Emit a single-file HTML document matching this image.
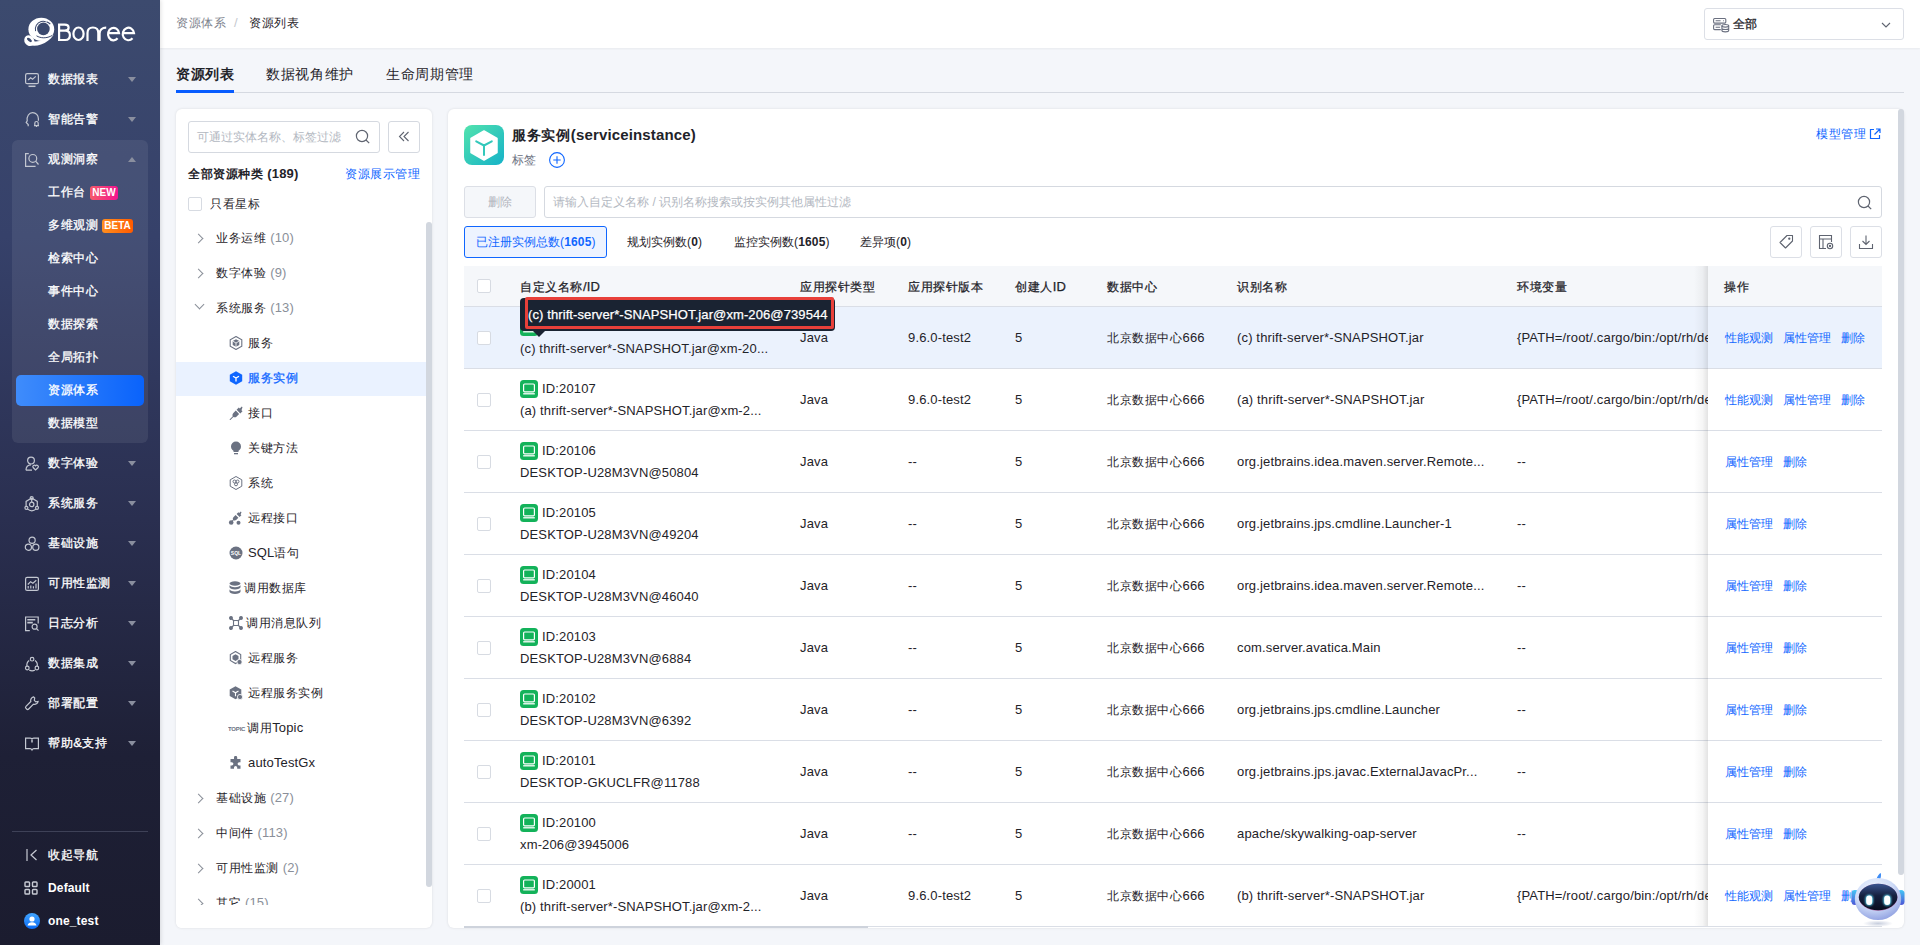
<!DOCTYPE html>
<html><head><meta charset="utf-8">
<style>
*{box-sizing:border-box;margin:0;padding:0}
html,body{width:1920px;height:945px;overflow:hidden;background:#f4f6fa;font-family:"Liberation Sans",sans-serif;color:#1f2329}
.abs{position:absolute}
.t{position:absolute;white-space:nowrap;line-height:16px;letter-spacing:.15px}
.c{font-size:calc(1em - 1px);letter-spacing:.05em}
#side{position:absolute;left:0;top:0;width:160px;height:945px;z-index:5;box-shadow:1px 0 4px rgba(0,0,0,.12);background:linear-gradient(180deg,#3c4a6e 0%,#36416a 25%,#2a2f50 55%,#1e2036 80%,#1b1c2f 100%)}
.ar{position:absolute;width:0;height:0;border-left:4px solid transparent;border-right:4px solid transparent;border-top:5px solid #8a8f9f}
.aru{position:absolute;width:0;height:0;border-left:4px solid transparent;border-right:4px solid transparent;border-bottom:5px solid #8a8f9f}
.card{position:absolute;background:#fff;border-radius:6px;box-shadow:0 0 3px rgba(0,0,0,.11)}
.inp{position:absolute;border:1px solid #d5d9e0;border-radius:3px;background:#fff}
.cb{position:absolute;width:14px;height:14px;border:1px solid #d7dbe2;border-radius:2px;background:#fff}
.arr{position:absolute;width:7px;height:7px;border-right:1.3px solid #8a8f99;border-top:1.3px solid #8a8f99;transform:rotate(45deg)}
.arrd{position:absolute;width:7px;height:7px;border-right:1.3px solid #8a8f99;border-bottom:1.3px solid #8a8f99;transform:rotate(45deg)}
.n .c{font-size:1em;letter-spacing:0}
.m{-webkit-text-stroke:.3px currentColor}
.btn{position:absolute;width:32px;height:32px;border:1px solid #dcdfe6;border-radius:3px;background:#fff}
</style></head>
<body>
<div id="side">
<svg class="abs" style="left:20px;top:12px" width="120" height="40" viewBox="0 0 120 40">
<ellipse cx="21.3" cy="17.3" rx="12.9" ry="11.6" fill="#fff"/>
<path d="M6.5 29.5C9 34.5 15 34.5 21 32.5c5-1.7 9.5-5 12.5-9.5L31 21.5c-3 4-7 6.5-11.5 7.5-4 .8-8 .3-11-1z" fill="#fff"/>
<ellipse cx="9.3" cy="28.7" rx="4.8" ry="5.6" transform="rotate(-35 9.3 28.7)" fill="#fff"/>
<ellipse cx="9.4" cy="27.9" rx="2.9" ry="1.5" transform="rotate(38 9.4 27.9)" fill="#3c4a6e"/>
<circle cx="23.2" cy="17.2" r="7.9" fill="none" stroke="#3c4a6e" stroke-width="1" stroke-dasharray="17 50" transform="rotate(165 23.2 17.2)"/>
<circle cx="23.4" cy="16.9" r="6.3" fill="#3c4a6e"/>
<path d="M26.5 9.8c1.5.5 2.8 1.3 3.8 2.3" fill="none" stroke="#3c4a6e" stroke-width="1.2"/>
<path d="M16.5 23.8c4 2.5 10 3 16-.5" fill="none" stroke="#3c4a6e" stroke-width="1"/>
<g fill="none" stroke="#fff" stroke-width="2.2">
<path d="M39.1 28V12.7h5.6c2.5 0 3.9 1.4 3.9 3.1 0 1.8-1.4 2.9-3.9 2.9H39.1M44.7 18.7h.6c2.9 0 4.6 1.5 4.6 4.6 0 3-1.9 4.7-4.6 4.7H38"/>
<ellipse cx="58.5" cy="21.75" rx="5.1" ry="6.25"/>
<path d="M67.5 29.1V21c0-3.5 2.2-5.5 5.4-5.5s5.4 2 5.4 5.5v8.1"/>
<path d="M79.6 29.1V21.5c0-3.5 2.5-5.8 6.6-5.8"/>
<path d="M88 21.2H99A5.5 6.25 0 1 0 97.6 26.3"/>
<path d="M102.8 21.2H114A5.65 6.25 0 1 0 112.5 26.3"/>
</g>
</svg>
<div class="abs" style="left:25px;top:72px;height:16px"><svg width="15" height="16" viewBox="0 0 15 16" fill="none" stroke="#c3c7d1" stroke-width="1.2" style="overflow:visible"><rect x="0.6" y="1.7" width="12.8" height="10" rx="1.5"/><path d="M3.2 8l2.4-2.3 2 1.5 3.2-2.8"/><path d="M3.5 14.3h7" stroke-width="1.5"/></svg></div><div class="t m" style="left:48px;top:71px;font-size:13px;color:#fff;font-weight:normal;"><span class="c">数据报表</span></div><div class="ar" style="left:128px;top:77px"></div>
<div class="abs" style="left:25px;top:112px;height:16px"><svg width="15" height="16" viewBox="0 0 15 16" fill="none" stroke="#c3c7d1" stroke-width="1.2" style="overflow:visible"><path d="M3.2 14.2v-1.7L1.2 10.4 2.2 8.8C1.6 4.2 4 .7 7.6.7c3.3 0 5.8 2.6 5.8 6v2"/><path d="M9 13.6h5M9.8 13.6v-2.4a1.7 1.7 0 013.4 0v2.4M11.5 14.3v.8"/></svg></div><div class="t m" style="left:48px;top:111px;font-size:13px;color:#fff;font-weight:normal;"><span class="c">智能告警</span></div><div class="ar" style="left:128px;top:117px"></div>
<div class="abs" style="left:12px;top:140px;width:136px;height:303px;border-radius:6px;background:rgba(255,255,255,.075)"></div>
<div class="abs" style="left:25px;top:152px;height:16px"><svg width="15" height="16" viewBox="0 0 15 16" fill="none" stroke="#c3c7d1" stroke-width="1.2" style="overflow:visible"><path d="M3.8 1.6H0.6v12.7h10"/><circle cx="7.8" cy="6.4" r="3.9"/><path d="M10.6 9.2l2.9 3.3"/></svg></div><div class="t m" style="left:48px;top:151px;font-size:13px;color:#fff;font-weight:normal;"><span class="c">观测洞察</span></div><div class="aru" style="left:128px;top:157px"></div>
<div class="abs" style="left:16px;top:375px;width:128px;height:31px;border-radius:5px;background:linear-gradient(90deg,#3f8cfb,#0a63fb)"></div>
<div class="t m" style="left:48px;top:184px;font-size:13px;color:#fff;font-weight:normal;"><span class="c">工作台</span></div>
<div class="t m" style="left:48px;top:217px;font-size:13px;color:#fff;font-weight:normal;"><span class="c">多维观测</span></div>
<div class="t m" style="left:48px;top:250px;font-size:13px;color:#fff;font-weight:normal;"><span class="c">检索中心</span></div>
<div class="t m" style="left:48px;top:283px;font-size:13px;color:#fff;font-weight:normal;"><span class="c">事件中心</span></div>
<div class="t m" style="left:48px;top:316px;font-size:13px;color:#fff;font-weight:normal;"><span class="c">数据探索</span></div>
<div class="t m" style="left:48px;top:349px;font-size:13px;color:#fff;font-weight:normal;"><span class="c">全局拓扑</span></div>
<div class="t m" style="left:48px;top:382px;font-size:13px;color:#fff;font-weight:normal;"><span class="c">资源体系</span></div>
<div class="t m" style="left:48px;top:415px;font-size:13px;color:#fff;font-weight:normal;"><span class="c">数据模型</span></div>
<div class="abs" style="left:90px;top:186px;width:28px;height:14px;border-radius:3px;background:linear-gradient(90deg,#f65b6a,#f2138f);color:#fff;font-size:10px;font-weight:bold;line-height:14px;text-align:center">NEW</div>
<div class="abs" style="left:102px;top:219px;width:31px;height:14px;border-radius:3px;background:linear-gradient(90deg,#ff8f1f,#ff5a00);color:#fff;font-size:10px;font-weight:bold;line-height:14px;text-align:center">BETA</div>
<div class="abs" style="left:25px;top:456px;height:16px"><svg width="15" height="16" viewBox="0 0 15 16" fill="none" stroke="#c3c7d1" stroke-width="1.2" style="overflow:visible"><circle cx="6" cy="4.6" r="3.4"/><path d="M1 14.2c0-3.3 2-5.4 5-5.4M1 14.2h6"/><path d="M10.6 14l-2.5-2.5a1.45 1.45 0 012.5-1.7 1.45 1.45 0 012.5 1.7z"/></svg></div><div class="t m" style="left:48px;top:455px;font-size:13px;color:#fff;font-weight:normal;"><span class="c">数字体验</span></div><div class="ar" style="left:128px;top:461px"></div>
<div class="abs" style="left:25px;top:496px;height:16px"><svg width="15" height="16" viewBox="0 0 15 16" fill="none" stroke="#c3c7d1" stroke-width="1.2" style="overflow:visible"><path d="M6.7 2.1L1.1 5.4v5M6.7 2.1l5.6 3.3v5M2.3 12.9c2.8 2.4 6.2 2.4 9 0M6.7 3.6v2.5"/><circle cx="6.7" cy="2.1" r="1.5"/><circle cx="1.4" cy="11.8" r="1.5"/><circle cx="12" cy="11.8" r="1.5"/><circle cx="6.7" cy="8.4" r="2.2"/></svg></div><div class="t m" style="left:48px;top:495px;font-size:13px;color:#fff;font-weight:normal;"><span class="c">系统服务</span></div><div class="ar" style="left:128px;top:501px"></div>
<div class="abs" style="left:25px;top:536px;height:16px"><svg width="15" height="16" viewBox="0 0 15 16" fill="none" stroke="#c3c7d1" stroke-width="1.2" style="overflow:visible"><circle cx="7.1" cy="4.2" r="3.1"/><circle cx="3.4" cy="11.2" r="3.1"/><circle cx="10.8" cy="11.2" r="3.1"/></svg></div><div class="t m" style="left:48px;top:535px;font-size:13px;color:#fff;font-weight:normal;"><span class="c">基础设施</span></div><div class="ar" style="left:128px;top:541px"></div>
<div class="abs" style="left:25px;top:576px;height:16px"><svg width="15" height="16" viewBox="0 0 15 16" fill="none" stroke="#c3c7d1" stroke-width="1.2" style="overflow:visible"><rect x="0.6" y="1.4" width="12.8" height="13" rx="1.5"/><path d="M3.2 12.5v-2.5M5.8 12.5V9.5M8.4 12.5v-2.3M11 12.5V7.5M2.8 8.5l2.8-2.8 2.3 1.6 3.4-3"/></svg></div><div class="t m" style="left:48px;top:575px;font-size:13px;color:#fff;font-weight:normal;"><span class="c">可用性监测</span></div><div class="ar" style="left:128px;top:581px"></div>
<div class="abs" style="left:25px;top:616px;height:16px"><svg width="15" height="16" viewBox="0 0 15 16" fill="none" stroke="#c3c7d1" stroke-width="1.2" style="overflow:visible"><path d="M4.8 14.6H0.6V1h12.6v6.4"/><circle cx="9.6" cy="10.7" r="2.5"/><path d="M11.5 12.6l2 2"/><path d="M2.3 3.8h8M2.3 6.6h5.5" stroke-width="1.6"/></svg></div><div class="t m" style="left:48px;top:615px;font-size:13px;color:#fff;font-weight:normal;"><span class="c">日志分析</span></div><div class="ar" style="left:128px;top:621px"></div>
<div class="abs" style="left:25px;top:656px;height:16px"><svg width="15" height="16" viewBox="0 0 15 16" fill="none" stroke="#c3c7d1" stroke-width="1.2" style="overflow:visible"><path d="M4.2 4.5A5.6 5.6 0 002 10.2M10 4.5a5.6 5.6 0 012.2 5.7M4.2 13.9a5.6 5.6 0 005.8 0"/><circle cx="7.1" cy="3.2" r="1.8"/><circle cx="2.3" cy="12" r="1.8"/><circle cx="11.9" cy="12" r="1.8"/></svg></div><div class="t m" style="left:48px;top:655px;font-size:13px;color:#fff;font-weight:normal;"><span class="c">数据集成</span></div><div class="ar" style="left:128px;top:661px"></div>
<div class="abs" style="left:25px;top:696px;height:16px"><svg width="15" height="16" viewBox="0 0 15 16" fill="none" stroke="#c3c7d1" stroke-width="1.2" style="overflow:visible"><path d="M8.6.9a3.6 3.6 0 00-2.8 4.6L1 10.3a1.5 1.5 0 000 2.1l.6.6a1.5 1.5 0 002.1 0l4.8-4.8a3.6 3.6 0 004.6-2.8l-2.3.4-1.5-1.5.4-2.3z"/></svg></div><div class="t m" style="left:48px;top:695px;font-size:13px;color:#fff;font-weight:normal;"><span class="c">部署配置</span></div><div class="ar" style="left:128px;top:701px"></div>
<div class="abs" style="left:25px;top:736px;height:16px"><svg width="15" height="16" viewBox="0 0 15 16" fill="none" stroke="#c3c7d1" stroke-width="1.2" style="overflow:visible"><path d="M0.6 2.1h4.6c.9 0 1.8.6 1.8 1.5 0-.9.9-1.5 1.8-1.5h4.6v10.6H8.8c-.9 0-1.4.4-1.8 1.2-.4-.8-.9-1.2-1.8-1.2H0.6z"/><path d="M7 3.8v2.6" stroke-width="1.5"/></svg></div><div class="t m" style="left:48px;top:735px;font-size:13px;color:#fff;font-weight:normal;"><span class="c">帮助</span>&amp;<span class="c">支持</span></div><div class="ar" style="left:128px;top:741px"></div>
<div class="abs" style="left:12px;top:831px;width:136px;height:1px;background:#3e4157"></div>
<svg class="abs" style="left:26px;top:849px" width="12" height="12" viewBox="0 0 12 12" fill="none" stroke="#c8cbd4" stroke-width="1.2"><path d="M1 0v12M10.5 1L5 6l5.5 5"/></svg>
<div class="t m" style="left:48px;top:847px;font-size:13px;color:#fff;font-weight:normal;"><span class="c">收起导航</span></div>
<svg class="abs" style="left:24px;top:881px" width="14" height="14" viewBox="0 0 14 14" fill="none" stroke="#c8cbd4" stroke-width="1.4"><rect x="1" y="1" width="4.5" height="4.5" rx=".8"/><rect x="8.5" y="1" width="4.5" height="4.5" rx=".8"/><rect x="1" y="8.5" width="4.5" height="4.5" rx=".8"/><rect x="8.5" y="8.5" width="4.5" height="4.5" rx=".8"/></svg>
<div class="t" style="left:48px;top:880px;font-size:12px;color:#fff;font-weight:bold;">Default</div>
<svg class="abs" style="left:24px;top:913px" width="16" height="16" viewBox="0 0 16 16"><defs><linearGradient id="av" x1="0" y1="0" x2="0" y2="1"><stop offset="0" stop-color="#42a5ff"/><stop offset="1" stop-color="#0b6cf5"/></linearGradient></defs><circle cx="8" cy="8" r="8" fill="url(#av)"/><circle cx="8" cy="6" r="2.6" fill="#fff"/><path d="M3.5 12.5c.5-2.2 2.3-3.3 4.5-3.3s4 1.1 4.5 3.3z" fill="#fff"/></svg>
<div class="t" style="left:48px;top:913px;font-size:12px;color:#fff;font-weight:bold;">one_test</div>
</div>
<div class="abs" style="left:160px;top:0;width:1760px;height:48px;background:#fff;box-shadow:0 1px 2px rgba(0,0,0,.05)"></div>
<div class="t" style="left:176px;top:15px;font-size:13px;color:#7d828c;font-weight:normal;"><span class="c">资源体系</span></div>
<div class="t" style="left:234px;top:15px;font-size:13px;color:#c5c8ce;font-weight:normal;">/</div>
<div class="t" style="left:249px;top:15px;font-size:13px;color:#1f2329;font-weight:normal;"><span class="c">资源列表</span></div>
<div class="abs" style="left:1704px;top:8px;width:200px;height:32px;border:1px solid #dcdfe6;border-radius:3px;background:#fff">
<svg class="abs" style="left:8px;top:7px" width="17" height="17" viewBox="0 0 17 17" fill="none" stroke="#6b7080" stroke-width="1.1"><rect x="0.6" y="2.5" width="12.2" height="4.6" rx="1"/><path d="M7.8 8.8H1.6a1 1 0 00-1 1v2.8a1 1 0 001 1h6.2M2.6 4.8h5M10.2 4.8h.8M2.6 11.2h4.5"/><ellipse cx="12.3" cy="9.8" rx="3.4" ry="1.3"/><path d="M8.9 9.8v4.8c0 .7 1.5 1.3 3.4 1.3s3.4-.6 3.4-1.3V9.8M8.9 12.2c0 .7 1.5 1.3 3.4 1.3s3.4-.6 3.4-1.3"/></svg>
<svg class="abs" style="left:176px;top:11px" width="10" height="10" viewBox="0 0 10 10" fill="none" stroke="#5f6470" stroke-width="1.1"><path d="M1 3l4 4 4-4"/></svg>
</div>
<div class="t m n" style="left:1733px;top:16px;font-size:12px;color:#1f2329;font-weight:normal;"><span class="c">全部</span></div>
<div class="t" style="left:176px;top:66px;font-size:15px;color:#1f2329;font-weight:bold;"><span class="c">资源列表</span></div>
<div class="t" style="left:266px;top:66px;font-size:15px;color:#1f2329;font-weight:normal;"><span class="c">数据视角维护</span></div>
<div class="t" style="left:386px;top:66px;font-size:15px;color:#1f2329;font-weight:normal;"><span class="c">生命周期管理</span></div>
<div class="abs" style="left:176px;top:92px;width:1728px;height:1px;background:#d5d9e1"></div>
<div class="abs" style="left:176px;top:90px;width:58px;height:3px;background:#075cff"></div>
<div class="card" style="left:176px;top:109px;width:256px;height:819px"></div>
<div class="inp" style="left:188px;top:121px;width:192px;height:32px"></div>
<div class="t n" style="left:197px;top:129px;font-size:12px;color:#b3b8c1;font-weight:normal;"><span class="c">可通过实体名称、标签过滤</span></div>
<svg class="abs" style="left:355px;top:129px" width="16" height="16" viewBox="0 0 16 16" fill="none" stroke="#5f6470" stroke-width="1.2"><circle cx="7" cy="7" r="5.6"/><path d="M11 11l3.2 3.2"/></svg>
<div class="inp" style="left:388px;top:121px;width:32px;height:32px"></div>
<svg class="abs" style="left:398px;top:131px" width="12" height="11" viewBox="0 0 12 11" fill="none" stroke="#5f6470" stroke-width="1.1"><path d="M6 1L1.5 5.5 6 10M10.5 1L6 5.5 10.5 10"/></svg>
<div class="t" style="left:188px;top:166px;font-size:13px;color:#1f2329;font-weight:bold;"><span class="c">全部资源种类</span> (189)</div>
<div class="t" style="left:345px;top:166px;font-size:13px;color:#0f66ff;font-weight:normal;"><span class="c">资源展示管理</span></div>
<div class="cb" style="left:188px;top:197px"></div>
<div class="t" style="left:210px;top:196px;font-size:13px;color:#1f2329;font-weight:normal;"><span class="c">只看星标</span></div>
<div class="abs" style="left:176px;top:362px;width:250px;height:34px;background:#eaf2ff"></div>
<div class="abs" style="left:426px;top:222px;width:6px;height:665px;border-radius:3px;background:#d2d7df"></div>
<div class="arr" style="left:195px;top:235px"></div><div class="t" style="left:216px;top:230px;font-size:13px;color:#1f2329"><span class="c">业务运维</span> <span style="color:#8a8f99">(10)</span></div>
<div class="arr" style="left:195px;top:270px"></div><div class="t" style="left:216px;top:265px;font-size:13px;color:#1f2329"><span class="c">数字体验</span> <span style="color:#8a8f99">(9)</span></div>
<div class="arrd" style="left:196px;top:301px"></div><div class="t" style="left:216px;top:300px;font-size:13px;color:#1f2329"><span class="c">系统服务</span> <span style="color:#8a8f99">(13)</span></div>
<div class="abs" style="left:229px;top:336px;height:14px"><svg width="14" height="14" viewBox="0 0 14 14"><path d="M7 .5l5.8 3.3v6.4L7 13.5 1.2 10.2V3.8z" fill="none" stroke="#6b7282" stroke-width="1.1"/><path d="M7 3.2l3.3 1.9v3.8L7 10.8 3.7 8.9V5.1z" fill="#6b7282"/><path d="M3.7 5.1L7 7l3.3-1.9M7 7v3.8" stroke="#fff" stroke-width=".8" fill="none"/></svg></div>
<div class="t" style="left:248px;top:335px;font-size:13px;color:#1f2329;font-weight:normal;"><span class="c">服务</span></div>
<div class="abs" style="left:229px;top:371px;height:14px"><svg width="14" height="14" viewBox="0 0 14 14"><path d="M7 .3l6.2 3.5v6.4L7 13.7 .8 10.2V3.8z" fill="#0f66ff"/><path d="M4 5.2L7 7l3-1.8M7 7v3.5" stroke="#fff" stroke-width="1.3" fill="none"/></svg></div>
<div class="t m" style="left:248px;top:370px;font-size:13px;color:#0f66ff;font-weight:normal;"><span class="c">服务实例</span></div>
<div class="abs" style="left:229px;top:406px;height:14px"><svg width="14" height="14" viewBox="0 0 14 14" fill="#6b7282"><path d="M13.5 1.2l-.7-.7-2 2-1-1-2.2 2.2 3.7 3.7 2.2-2.2-1-1z"/><path d="M6.8 4.6L4.4 7c-1 1-1.2 2.3-.6 3.3L.5 13.5l.7.7 3.2-3.2c1 .6 2.4.4 3.3-.6l2.4-2.4z"/></svg></div>
<div class="t" style="left:248px;top:405px;font-size:13px;color:#1f2329;font-weight:normal;"><span class="c">接口</span></div>
<div class="abs" style="left:229px;top:441px;height:14px"><svg width="14" height="14" viewBox="0 0 14 14" fill="#6b7282"><circle cx="7" cy="5.5" r="5"/><path d="M4.5 9h5v2h-5z"/><path d="M5 12h4v1.3H5z"/></svg></div>
<div class="t" style="left:248px;top:440px;font-size:13px;color:#1f2329;font-weight:normal;"><span class="c">关键方法</span></div>
<div class="abs" style="left:229px;top:476px;height:14px"><svg width="14" height="14" viewBox="0 0 14 14" fill="none" stroke="#6b7282" stroke-width="1"><path d="M7 .5l5.8 3.3v6.4L7 13.5 1.2 10.2V3.8z"/><circle cx="5.5" cy="5.5" r="1.5"/><circle cx="8.5" cy="5.5" r="1.5"/><circle cx="7" cy="8.3" r="1.5"/></svg></div>
<div class="t" style="left:248px;top:475px;font-size:13px;color:#1f2329;font-weight:normal;"><span class="c">系统</span></div>
<div class="abs" style="left:228px;top:511px;height:14px"><svg width="14" height="14" viewBox="0 0 14 14" fill="#6b7282"><path d="M13.5 1.2l-.7-.7-1.6 1.6-.8-.8-1.8 1.8 3 3 1.8-1.8-.8-.8z"/><path d="M7.6 3.9L5.6 5.9c-.8.8-1 1.9-.5 2.7L2.8 10.9l.6.6 2.3-2.3c.8.5 1.9.3 2.7-.5l2-2z"/><circle cx="3.2" cy="11.5" r="2.3"/><circle cx="10.5" cy="11.8" r="2"/></svg></div>
<div class="t" style="left:248px;top:510px;font-size:13px;color:#1f2329;font-weight:normal;"><span class="c">远程接口</span></div>
<div class="abs" style="left:229px;top:546px;height:14px"><svg width="14" height="14" viewBox="0 0 14 14"><circle cx="7" cy="7" r="6.5" fill="#6b7282"/><text x="7" y="9" font-size="5" font-family="Liberation Sans" font-weight="bold" fill="#fff" text-anchor="middle">SQL</text></svg></div>
<div class="t" style="left:248px;top:545px;font-size:13px;color:#1f2329;font-weight:normal;">SQL<span class="c">语句</span></div>
<div class="abs" style="left:229px;top:581px;height:14px"><svg width="12" height="14" viewBox="0 0 12 14" fill="#6b7282"><ellipse cx="6" cy="2.5" rx="5.5" ry="2.2"/><path d="M.5 4v2.2c0 1.2 2.5 2.2 5.5 2.2s5.5-1 5.5-2.2V4c0 1.2-2.5 2.2-5.5 2.2S.5 5.2.5 4z"/><path d="M.5 8.2v2.5c0 1.2 2.5 2.2 5.5 2.2s5.5-1 5.5-2.2V8.2c0 1.2-2.5 2.2-5.5 2.2S.5 9.4.5 8.2z"/></svg></div>
<div class="t" style="left:244px;top:580px;font-size:13px;color:#1f2329;font-weight:normal;"><span class="c">调用数据库</span></div>
<div class="abs" style="left:229px;top:616px;height:14px"><svg width="14" height="14" viewBox="0 0 14 14" fill="none" stroke="#6b7282" stroke-width="1.1"><circle cx="2" cy="2" r="1.4" fill="#6b7282"/><circle cx="12" cy="2" r="1.4" fill="#6b7282"/><circle cx="2" cy="12" r="1.4" fill="#6b7282"/><circle cx="12" cy="12" r="1.4" fill="#6b7282"/><path d="M3 3l2 2M11 3L9 5M3 11l2-2M11 11L9 9"/><rect x="4.5" y="4.5" width="5" height="5" rx="1"/></svg></div>
<div class="t" style="left:246px;top:615px;font-size:13px;color:#1f2329;font-weight:normal;"><span class="c">调用消息队列</span></div>
<div class="abs" style="left:229px;top:651px;height:14px"><svg width="14" height="14" viewBox="0 0 14 14"><path d="M6.5.5l5.2 3v6L6.5 12.5 1.3 9.5v-6z" fill="none" stroke="#6b7282" stroke-width="1.1"/><path d="M6.5 3.2l3 1.7v3.4l-3 1.7-3-1.7V4.9z" fill="#6b7282"/><circle cx="10.5" cy="11" r="2.6" fill="#6b7282" stroke="#fff" stroke-width=".8"/></svg></div>
<div class="t" style="left:248px;top:650px;font-size:13px;color:#1f2329;font-weight:normal;"><span class="c">远程服务</span></div>
<div class="abs" style="left:229px;top:686px;height:14px"><svg width="14" height="14" viewBox="0 0 14 14"><path d="M6.5.3l5.8 3.3v6.4L6.5 13.3.7 10V3.6z" fill="#6b7282"/><path d="M3.5 5L6.5 6.8 9.5 5M6.5 6.8v3.4" stroke="#fff" stroke-width="1.1" fill="none"/><circle cx="11" cy="11" r="2.6" fill="#6b7282" stroke="#fff" stroke-width=".8"/></svg></div>
<div class="t" style="left:248px;top:685px;font-size:13px;color:#1f2329;font-weight:normal;"><span class="c">远程服务实例</span></div>
<div class="abs" style="left:228px;top:721px;height:14px"><svg width="18" height="14" viewBox="0 0 18 14"><text x="0" y="9.5" font-size="6" font-family="Liberation Sans" font-weight="bold" fill="#6b7282" letter-spacing="-.2">TOPIC</text></svg></div>
<div class="t" style="left:247px;top:720px;font-size:13px;color:#1f2329;font-weight:normal;"><span class="c">调用</span>Topic</div>
<div class="abs" style="left:229px;top:756px;height:14px"><svg width="14" height="14" viewBox="0 0 14 14" fill="#6b7282"><path d="M5 1.5a1.6 1.6 0 013.2 0V3h3.3v3.2h-1.3a1.6 1.6 0 000 3.2h1.3v3.3H8.2v-1.2a1.6 1.6 0 00-3.2 0v1.2H1.5V9.4h1.3a1.6 1.6 0 000-3.2H1.5V3H5z"/></svg></div>
<div class="t" style="left:248px;top:755px;font-size:13px;color:#1f2329;font-weight:normal;">autoTestGx</div>
<div class="arr" style="left:195px;top:795px"></div><div class="t" style="left:216px;top:790px;font-size:13px;color:#1f2329"><span class="c">基础设施</span> <span style="color:#8a8f99">(27)</span></div>
<div class="arr" style="left:195px;top:830px"></div><div class="t" style="left:216px;top:825px;font-size:13px;color:#1f2329"><span class="c">中间件</span> <span style="color:#8a8f99">(113)</span></div>
<div class="arr" style="left:195px;top:865px"></div><div class="t" style="left:216px;top:860px;font-size:13px;color:#1f2329"><span class="c">可用性监测</span> <span style="color:#8a8f99">(2)</span></div>
<div class="arr" style="left:195px;top:900px"></div><div class="t" style="left:216px;top:895px;font-size:13px;color:#1f2329"><span class="c">其它</span> <span style="color:#8a8f99">(15)</span></div>
<div class="abs" style="left:176px;top:905px;width:250px;height:23px;background:#fff;border-radius:0 0 0 6px"></div>
<div class="card" style="left:448px;top:109px;width:1456px;height:819px"></div>
<svg class="abs" style="left:464px;top:125px" width="40" height="40" viewBox="0 0 40 40"><defs><linearGradient id="tg" x1="0" y1="0" x2="1" y2="1"><stop offset="0" stop-color="#52e3ad"/><stop offset="1" stop-color="#15b2c8"/></linearGradient></defs>
<rect width="40" height="40" rx="8" fill="url(#tg)"/>
<path d="M20 6l13 7.5v14L20 35 7 27.5v-14z" fill="#fff" stroke="#fff" stroke-width="1.5" stroke-linejoin="round"/>
<path d="M12.2 16.3L20 20.5l7.8-4.2M20 20.5v9.5" fill="none" stroke="#33c8bb" stroke-width="2" stroke-linecap="round"/></svg>
<div class="t" style="left:512px;top:127px;font-size:15px;color:#1f2329;font-weight:bold;"><span class="c">服务实例</span>(serviceinstance)</div>
<div class="t n" style="left:512px;top:152px;font-size:12px;color:#6b7080;font-weight:normal;"><span class="c">标签</span></div>
<svg class="abs" style="left:549px;top:152px" width="16" height="16" viewBox="0 0 16 16" fill="none" stroke="#0f66ff" stroke-width="1.1"><circle cx="8" cy="8" r="7.4"/><path d="M8 4.3v7.4M4.3 8h7.4"/></svg>
<div class="t" style="left:1816px;top:126px;font-size:13px;color:#0f66ff;font-weight:normal;"><span class="c">模型管理</span></div>
<svg class="abs" style="left:1869px;top:128px" width="12" height="12" viewBox="0 0 12 12" fill="none" stroke="#0f66ff" stroke-width="1.2"><path d="M5 1.5H1.5v9h9V7M7 1h4v4M11 1L5.5 6.5"/></svg>
<div class="abs" style="left:464px;top:186px;width:72px;height:32px;border:1px solid #dcdfe6;border-radius:3px;background:#f5f7fa"></div>
<div class="t n" style="left:488px;top:194px;font-size:12px;color:#b1b5bd;font-weight:normal;"><span class="c">删除</span></div>
<div class="inp" style="left:544px;top:186px;width:1338px;height:32px"></div>
<div class="t n" style="left:553px;top:194px;font-size:12px;color:#b3b8c1;font-weight:normal;"><span class="c">请输入自定义名称</span> / <span class="c">识别名称搜索或按实例其他属性过滤</span></div>
<svg class="abs" style="left:1857px;top:195px" width="16" height="16" viewBox="0 0 16 16" fill="none" stroke="#5f6470" stroke-width="1.2"><circle cx="7" cy="7" r="5.6"/><path d="M11 11l3.2 3.2"/></svg>
<div class="abs" style="left:464px;top:226px;width:143px;height:32px;border:1px solid #0f66ff;border-radius:3px;background:#edf3ff"></div>
<div class="t n" style="left:476px;top:234px;font-size:12px;color:#0f66ff"><span class="c">已注册实例总数</span>(<b>1605</b>)</div>
<div class="t n" style="left:627px;top:234px;font-size:12px;color:#1f2329"><span class="c">规划实例数</span>(<b>0</b>)</div>
<div class="t n" style="left:734px;top:234px;font-size:12px;color:#1f2329"><span class="c">监控实例数</span>(<b>1605</b>)</div>
<div class="t n" style="left:860px;top:234px;font-size:12px;color:#1f2329"><span class="c">差异项</span>(<b>0</b>)</div>
<div class="btn" style="left:1770px;top:226px"></div><svg class="abs" style="left:1778px;top:234px" width="16" height="16" viewBox="0 0 16 16" fill="none" stroke="#5f6470" stroke-width="1.1"><path d="M9 1.5h5.5V7L7.5 14 2 8.5z" stroke-linejoin="round"/><circle cx="11.3" cy="4.7" r=".6" fill="#5f6470"/></svg>
<div class="btn" style="left:1810px;top:226px"></div><svg class="abs" style="left:1818px;top:234px" width="16" height="16" viewBox="0 0 16 16" fill="none" stroke="#5f6470" stroke-width="1.1"><path d="M8 14.5H1.5v-13h12V8M1.5 5h12M5 5v9.5"/><circle cx="12" cy="12" r="2.7"/><circle cx="12" cy="12" r=".6" fill="#5f6470"/></svg>
<div class="btn" style="left:1850px;top:226px"></div><svg class="abs" style="left:1858px;top:234px" width="16" height="16" viewBox="0 0 16 16" fill="none" stroke="#5f6470" stroke-width="1.1"><path d="M8 1.5v9M4.5 7L8 10.5 11.5 7M1.5 10v4.5h13V10"/></svg>
<div class="abs" style="left:464px;top:266px;width:1418px;height:41px;background:#f5f7fa;border-bottom:1px solid #dadee6"></div>
<div class="cb" style="left:477px;top:279px"></div>
<div class="t m" style="left:520px;top:279px;font-size:13px;color:#1f2329;font-weight:normal;-webkit-text-stroke:.25px #1f2329"><span class="c">自定义名称</span>/ID</div>
<div class="t m" style="left:800px;top:279px;font-size:13px;color:#1f2329;font-weight:normal;-webkit-text-stroke:.25px #1f2329"><span class="c">应用探针类型</span></div>
<div class="t m" style="left:908px;top:279px;font-size:13px;color:#1f2329;font-weight:normal;-webkit-text-stroke:.25px #1f2329"><span class="c">应用探针版本</span></div>
<div class="t m" style="left:1015px;top:279px;font-size:13px;color:#1f2329;font-weight:normal;-webkit-text-stroke:.25px #1f2329"><span class="c">创建人</span>ID</div>
<div class="t m" style="left:1107px;top:279px;font-size:13px;color:#1f2329;font-weight:normal;-webkit-text-stroke:.25px #1f2329"><span class="c">数据中心</span></div>
<div class="t m" style="left:1237px;top:279px;font-size:13px;color:#1f2329;font-weight:normal;-webkit-text-stroke:.25px #1f2329"><span class="c">识别名称</span></div>
<div class="t m" style="left:1517px;top:279px;font-size:13px;color:#1f2329;font-weight:normal;-webkit-text-stroke:.25px #1f2329"><span class="c">环境变量</span></div>
<div class="abs" style="left:464px;top:307px;width:1418px;height:62px;background:#ebf2fd;border-bottom:1px solid #dadee6"></div>
<div class="cb" style="left:477px;top:331px"></div>
<svg class="abs" style="left:520px;top:318px" width="18" height="18" viewBox="0 0 18 18"><rect width="18" height="18" rx="3.5" fill="#13b25a"/><rect x="3.6" y="4" width="10.8" height="7.8" rx="1" fill="none" stroke="#fff" stroke-width="1.2"/><path d="M3.2 13.8h11.6" stroke="#fff" stroke-width="1.3"/></svg>
<div class="t" style="left:542px;top:319px;font-size:13px;color:#1f2329;font-weight:normal;">ID:20108</div>
<div class="t" style="left:520px;top:341px;font-size:13px;color:#1f2329;font-weight:normal;">(c) thrift-server*-SNAPSHOT.jar@xm-20...</div>
<div class="t" style="left:800px;top:330px;font-size:13px;color:#1f2329;font-weight:normal;">Java</div>
<div class="t" style="left:908px;top:330px;font-size:13px;color:#1f2329;font-weight:normal;">9.6.0-test2</div>
<div class="t" style="left:1015px;top:330px;font-size:13px;color:#1f2329;font-weight:normal;">5</div>
<div class="t" style="left:1107px;top:330px;font-size:13px;color:#1f2329;font-weight:normal;"><span class="c">北京数据中心</span>666</div>
<div class="t" style="left:1237px;top:330px;font-size:13px;color:#1f2329;font-weight:normal;">(c) thrift-server*-SNAPSHOT.jar</div>
<div class="t" style="left:1517px;top:330px;font-size:13px;color:#1f2329;font-weight:normal;">{PATH=/root/.cargo/bin:/opt/rh/devtoolset</div>
<div class="abs" style="left:1708px;top:307px;width:174px;height:61px;background:#ebf2fd"></div>
<div class="t n" style="left:1725px;top:330px;font-size:12px;color:#0f66ff;font-weight:normal;"><span class="c">性能观测</span></div>
<div class="t n" style="left:1783px;top:330px;font-size:12px;color:#0f66ff;font-weight:normal;"><span class="c">属性管理</span></div>
<div class="t n" style="left:1841px;top:330px;font-size:12px;color:#0f66ff;font-weight:normal;"><span class="c">删除</span></div>
<div class="abs" style="left:464px;top:369px;width:1418px;height:62px;background:#fff;border-bottom:1px solid #dadee6"></div>
<div class="cb" style="left:477px;top:393px"></div>
<svg class="abs" style="left:520px;top:380px" width="18" height="18" viewBox="0 0 18 18"><rect width="18" height="18" rx="3.5" fill="#13b25a"/><rect x="3.6" y="4" width="10.8" height="7.8" rx="1" fill="none" stroke="#fff" stroke-width="1.2"/><path d="M3.2 13.8h11.6" stroke="#fff" stroke-width="1.3"/></svg>
<div class="t" style="left:542px;top:381px;font-size:13px;color:#1f2329;font-weight:normal;">ID:20107</div>
<div class="t" style="left:520px;top:403px;font-size:13px;color:#1f2329;font-weight:normal;">(a) thrift-server*-SNAPSHOT.jar@xm-2...</div>
<div class="t" style="left:800px;top:392px;font-size:13px;color:#1f2329;font-weight:normal;">Java</div>
<div class="t" style="left:908px;top:392px;font-size:13px;color:#1f2329;font-weight:normal;">9.6.0-test2</div>
<div class="t" style="left:1015px;top:392px;font-size:13px;color:#1f2329;font-weight:normal;">5</div>
<div class="t" style="left:1107px;top:392px;font-size:13px;color:#1f2329;font-weight:normal;"><span class="c">北京数据中心</span>666</div>
<div class="t" style="left:1237px;top:392px;font-size:13px;color:#1f2329;font-weight:normal;">(a) thrift-server*-SNAPSHOT.jar</div>
<div class="t" style="left:1517px;top:392px;font-size:13px;color:#1f2329;font-weight:normal;">{PATH=/root/.cargo/bin:/opt/rh/devtoolset</div>
<div class="abs" style="left:1708px;top:369px;width:174px;height:61px;background:#fff"></div>
<div class="t n" style="left:1725px;top:392px;font-size:12px;color:#0f66ff;font-weight:normal;"><span class="c">性能观测</span></div>
<div class="t n" style="left:1783px;top:392px;font-size:12px;color:#0f66ff;font-weight:normal;"><span class="c">属性管理</span></div>
<div class="t n" style="left:1841px;top:392px;font-size:12px;color:#0f66ff;font-weight:normal;"><span class="c">删除</span></div>
<div class="abs" style="left:464px;top:431px;width:1418px;height:62px;background:#fff;border-bottom:1px solid #dadee6"></div>
<div class="cb" style="left:477px;top:455px"></div>
<svg class="abs" style="left:520px;top:442px" width="18" height="18" viewBox="0 0 18 18"><rect width="18" height="18" rx="3.5" fill="#13b25a"/><rect x="3.6" y="4" width="10.8" height="7.8" rx="1" fill="none" stroke="#fff" stroke-width="1.2"/><path d="M3.2 13.8h11.6" stroke="#fff" stroke-width="1.3"/></svg>
<div class="t" style="left:542px;top:443px;font-size:13px;color:#1f2329;font-weight:normal;">ID:20106</div>
<div class="t" style="left:520px;top:465px;font-size:13px;color:#1f2329;font-weight:normal;">DESKTOP-U28M3VN@50804</div>
<div class="t" style="left:800px;top:454px;font-size:13px;color:#1f2329;font-weight:normal;">Java</div>
<div class="t" style="left:908px;top:454px;font-size:13px;color:#1f2329;font-weight:normal;">--</div>
<div class="t" style="left:1015px;top:454px;font-size:13px;color:#1f2329;font-weight:normal;">5</div>
<div class="t" style="left:1107px;top:454px;font-size:13px;color:#1f2329;font-weight:normal;"><span class="c">北京数据中心</span>666</div>
<div class="t" style="left:1237px;top:454px;font-size:13px;color:#1f2329;font-weight:normal;">org.jetbrains.idea.maven.server.Remote...</div>
<div class="t" style="left:1517px;top:454px;font-size:13px;color:#1f2329;font-weight:normal;">--</div>
<div class="abs" style="left:1708px;top:431px;width:174px;height:61px;background:#fff"></div>
<div class="t n" style="left:1725px;top:454px;font-size:12px;color:#0f66ff;font-weight:normal;"><span class="c">属性管理</span></div>
<div class="t n" style="left:1783px;top:454px;font-size:12px;color:#0f66ff;font-weight:normal;"><span class="c">删除</span></div>
<div class="abs" style="left:464px;top:493px;width:1418px;height:62px;background:#fff;border-bottom:1px solid #dadee6"></div>
<div class="cb" style="left:477px;top:517px"></div>
<svg class="abs" style="left:520px;top:504px" width="18" height="18" viewBox="0 0 18 18"><rect width="18" height="18" rx="3.5" fill="#13b25a"/><rect x="3.6" y="4" width="10.8" height="7.8" rx="1" fill="none" stroke="#fff" stroke-width="1.2"/><path d="M3.2 13.8h11.6" stroke="#fff" stroke-width="1.3"/></svg>
<div class="t" style="left:542px;top:505px;font-size:13px;color:#1f2329;font-weight:normal;">ID:20105</div>
<div class="t" style="left:520px;top:527px;font-size:13px;color:#1f2329;font-weight:normal;">DESKTOP-U28M3VN@49204</div>
<div class="t" style="left:800px;top:516px;font-size:13px;color:#1f2329;font-weight:normal;">Java</div>
<div class="t" style="left:908px;top:516px;font-size:13px;color:#1f2329;font-weight:normal;">--</div>
<div class="t" style="left:1015px;top:516px;font-size:13px;color:#1f2329;font-weight:normal;">5</div>
<div class="t" style="left:1107px;top:516px;font-size:13px;color:#1f2329;font-weight:normal;"><span class="c">北京数据中心</span>666</div>
<div class="t" style="left:1237px;top:516px;font-size:13px;color:#1f2329;font-weight:normal;">org.jetbrains.jps.cmdline.Launcher-1</div>
<div class="t" style="left:1517px;top:516px;font-size:13px;color:#1f2329;font-weight:normal;">--</div>
<div class="abs" style="left:1708px;top:493px;width:174px;height:61px;background:#fff"></div>
<div class="t n" style="left:1725px;top:516px;font-size:12px;color:#0f66ff;font-weight:normal;"><span class="c">属性管理</span></div>
<div class="t n" style="left:1783px;top:516px;font-size:12px;color:#0f66ff;font-weight:normal;"><span class="c">删除</span></div>
<div class="abs" style="left:464px;top:555px;width:1418px;height:62px;background:#fff;border-bottom:1px solid #dadee6"></div>
<div class="cb" style="left:477px;top:579px"></div>
<svg class="abs" style="left:520px;top:566px" width="18" height="18" viewBox="0 0 18 18"><rect width="18" height="18" rx="3.5" fill="#13b25a"/><rect x="3.6" y="4" width="10.8" height="7.8" rx="1" fill="none" stroke="#fff" stroke-width="1.2"/><path d="M3.2 13.8h11.6" stroke="#fff" stroke-width="1.3"/></svg>
<div class="t" style="left:542px;top:567px;font-size:13px;color:#1f2329;font-weight:normal;">ID:20104</div>
<div class="t" style="left:520px;top:589px;font-size:13px;color:#1f2329;font-weight:normal;">DESKTOP-U28M3VN@46040</div>
<div class="t" style="left:800px;top:578px;font-size:13px;color:#1f2329;font-weight:normal;">Java</div>
<div class="t" style="left:908px;top:578px;font-size:13px;color:#1f2329;font-weight:normal;">--</div>
<div class="t" style="left:1015px;top:578px;font-size:13px;color:#1f2329;font-weight:normal;">5</div>
<div class="t" style="left:1107px;top:578px;font-size:13px;color:#1f2329;font-weight:normal;"><span class="c">北京数据中心</span>666</div>
<div class="t" style="left:1237px;top:578px;font-size:13px;color:#1f2329;font-weight:normal;">org.jetbrains.idea.maven.server.Remote...</div>
<div class="t" style="left:1517px;top:578px;font-size:13px;color:#1f2329;font-weight:normal;">--</div>
<div class="abs" style="left:1708px;top:555px;width:174px;height:61px;background:#fff"></div>
<div class="t n" style="left:1725px;top:578px;font-size:12px;color:#0f66ff;font-weight:normal;"><span class="c">属性管理</span></div>
<div class="t n" style="left:1783px;top:578px;font-size:12px;color:#0f66ff;font-weight:normal;"><span class="c">删除</span></div>
<div class="abs" style="left:464px;top:617px;width:1418px;height:62px;background:#fff;border-bottom:1px solid #dadee6"></div>
<div class="cb" style="left:477px;top:641px"></div>
<svg class="abs" style="left:520px;top:628px" width="18" height="18" viewBox="0 0 18 18"><rect width="18" height="18" rx="3.5" fill="#13b25a"/><rect x="3.6" y="4" width="10.8" height="7.8" rx="1" fill="none" stroke="#fff" stroke-width="1.2"/><path d="M3.2 13.8h11.6" stroke="#fff" stroke-width="1.3"/></svg>
<div class="t" style="left:542px;top:629px;font-size:13px;color:#1f2329;font-weight:normal;">ID:20103</div>
<div class="t" style="left:520px;top:651px;font-size:13px;color:#1f2329;font-weight:normal;">DESKTOP-U28M3VN@6884</div>
<div class="t" style="left:800px;top:640px;font-size:13px;color:#1f2329;font-weight:normal;">Java</div>
<div class="t" style="left:908px;top:640px;font-size:13px;color:#1f2329;font-weight:normal;">--</div>
<div class="t" style="left:1015px;top:640px;font-size:13px;color:#1f2329;font-weight:normal;">5</div>
<div class="t" style="left:1107px;top:640px;font-size:13px;color:#1f2329;font-weight:normal;"><span class="c">北京数据中心</span>666</div>
<div class="t" style="left:1237px;top:640px;font-size:13px;color:#1f2329;font-weight:normal;">com.server.avatica.Main</div>
<div class="t" style="left:1517px;top:640px;font-size:13px;color:#1f2329;font-weight:normal;">--</div>
<div class="abs" style="left:1708px;top:617px;width:174px;height:61px;background:#fff"></div>
<div class="t n" style="left:1725px;top:640px;font-size:12px;color:#0f66ff;font-weight:normal;"><span class="c">属性管理</span></div>
<div class="t n" style="left:1783px;top:640px;font-size:12px;color:#0f66ff;font-weight:normal;"><span class="c">删除</span></div>
<div class="abs" style="left:464px;top:679px;width:1418px;height:62px;background:#fff;border-bottom:1px solid #dadee6"></div>
<div class="cb" style="left:477px;top:703px"></div>
<svg class="abs" style="left:520px;top:690px" width="18" height="18" viewBox="0 0 18 18"><rect width="18" height="18" rx="3.5" fill="#13b25a"/><rect x="3.6" y="4" width="10.8" height="7.8" rx="1" fill="none" stroke="#fff" stroke-width="1.2"/><path d="M3.2 13.8h11.6" stroke="#fff" stroke-width="1.3"/></svg>
<div class="t" style="left:542px;top:691px;font-size:13px;color:#1f2329;font-weight:normal;">ID:20102</div>
<div class="t" style="left:520px;top:713px;font-size:13px;color:#1f2329;font-weight:normal;">DESKTOP-U28M3VN@6392</div>
<div class="t" style="left:800px;top:702px;font-size:13px;color:#1f2329;font-weight:normal;">Java</div>
<div class="t" style="left:908px;top:702px;font-size:13px;color:#1f2329;font-weight:normal;">--</div>
<div class="t" style="left:1015px;top:702px;font-size:13px;color:#1f2329;font-weight:normal;">5</div>
<div class="t" style="left:1107px;top:702px;font-size:13px;color:#1f2329;font-weight:normal;"><span class="c">北京数据中心</span>666</div>
<div class="t" style="left:1237px;top:702px;font-size:13px;color:#1f2329;font-weight:normal;">org.jetbrains.jps.cmdline.Launcher</div>
<div class="t" style="left:1517px;top:702px;font-size:13px;color:#1f2329;font-weight:normal;">--</div>
<div class="abs" style="left:1708px;top:679px;width:174px;height:61px;background:#fff"></div>
<div class="t n" style="left:1725px;top:702px;font-size:12px;color:#0f66ff;font-weight:normal;"><span class="c">属性管理</span></div>
<div class="t n" style="left:1783px;top:702px;font-size:12px;color:#0f66ff;font-weight:normal;"><span class="c">删除</span></div>
<div class="abs" style="left:464px;top:741px;width:1418px;height:62px;background:#fff;border-bottom:1px solid #dadee6"></div>
<div class="cb" style="left:477px;top:765px"></div>
<svg class="abs" style="left:520px;top:752px" width="18" height="18" viewBox="0 0 18 18"><rect width="18" height="18" rx="3.5" fill="#13b25a"/><rect x="3.6" y="4" width="10.8" height="7.8" rx="1" fill="none" stroke="#fff" stroke-width="1.2"/><path d="M3.2 13.8h11.6" stroke="#fff" stroke-width="1.3"/></svg>
<div class="t" style="left:542px;top:753px;font-size:13px;color:#1f2329;font-weight:normal;">ID:20101</div>
<div class="t" style="left:520px;top:775px;font-size:13px;color:#1f2329;font-weight:normal;">DESKTOP-GKUCLFR@11788</div>
<div class="t" style="left:800px;top:764px;font-size:13px;color:#1f2329;font-weight:normal;">Java</div>
<div class="t" style="left:908px;top:764px;font-size:13px;color:#1f2329;font-weight:normal;">--</div>
<div class="t" style="left:1015px;top:764px;font-size:13px;color:#1f2329;font-weight:normal;">5</div>
<div class="t" style="left:1107px;top:764px;font-size:13px;color:#1f2329;font-weight:normal;"><span class="c">北京数据中心</span>666</div>
<div class="t" style="left:1237px;top:764px;font-size:13px;color:#1f2329;font-weight:normal;">org.jetbrains.jps.javac.ExternalJavacPr...</div>
<div class="t" style="left:1517px;top:764px;font-size:13px;color:#1f2329;font-weight:normal;">--</div>
<div class="abs" style="left:1708px;top:741px;width:174px;height:61px;background:#fff"></div>
<div class="t n" style="left:1725px;top:764px;font-size:12px;color:#0f66ff;font-weight:normal;"><span class="c">属性管理</span></div>
<div class="t n" style="left:1783px;top:764px;font-size:12px;color:#0f66ff;font-weight:normal;"><span class="c">删除</span></div>
<div class="abs" style="left:464px;top:803px;width:1418px;height:62px;background:#fff;border-bottom:1px solid #dadee6"></div>
<div class="cb" style="left:477px;top:827px"></div>
<svg class="abs" style="left:520px;top:814px" width="18" height="18" viewBox="0 0 18 18"><rect width="18" height="18" rx="3.5" fill="#13b25a"/><rect x="3.6" y="4" width="10.8" height="7.8" rx="1" fill="none" stroke="#fff" stroke-width="1.2"/><path d="M3.2 13.8h11.6" stroke="#fff" stroke-width="1.3"/></svg>
<div class="t" style="left:542px;top:815px;font-size:13px;color:#1f2329;font-weight:normal;">ID:20100</div>
<div class="t" style="left:520px;top:837px;font-size:13px;color:#1f2329;font-weight:normal;">xm-206@3945006</div>
<div class="t" style="left:800px;top:826px;font-size:13px;color:#1f2329;font-weight:normal;">Java</div>
<div class="t" style="left:908px;top:826px;font-size:13px;color:#1f2329;font-weight:normal;">--</div>
<div class="t" style="left:1015px;top:826px;font-size:13px;color:#1f2329;font-weight:normal;">5</div>
<div class="t" style="left:1107px;top:826px;font-size:13px;color:#1f2329;font-weight:normal;"><span class="c">北京数据中心</span>666</div>
<div class="t" style="left:1237px;top:826px;font-size:13px;color:#1f2329;font-weight:normal;">apache/skywalking-oap-server</div>
<div class="t" style="left:1517px;top:826px;font-size:13px;color:#1f2329;font-weight:normal;">--</div>
<div class="abs" style="left:1708px;top:803px;width:174px;height:61px;background:#fff"></div>
<div class="t n" style="left:1725px;top:826px;font-size:12px;color:#0f66ff;font-weight:normal;"><span class="c">属性管理</span></div>
<div class="t n" style="left:1783px;top:826px;font-size:12px;color:#0f66ff;font-weight:normal;"><span class="c">删除</span></div>
<div class="abs" style="left:464px;top:865px;width:1418px;height:62px;background:#fff;border-bottom:1px solid #dadee6"></div>
<div class="cb" style="left:477px;top:889px"></div>
<svg class="abs" style="left:520px;top:876px" width="18" height="18" viewBox="0 0 18 18"><rect width="18" height="18" rx="3.5" fill="#13b25a"/><rect x="3.6" y="4" width="10.8" height="7.8" rx="1" fill="none" stroke="#fff" stroke-width="1.2"/><path d="M3.2 13.8h11.6" stroke="#fff" stroke-width="1.3"/></svg>
<div class="t" style="left:542px;top:877px;font-size:13px;color:#1f2329;font-weight:normal;">ID:20001</div>
<div class="t" style="left:520px;top:899px;font-size:13px;color:#1f2329;font-weight:normal;">(b) thrift-server*-SNAPSHOT.jar@xm-2...</div>
<div class="t" style="left:800px;top:888px;font-size:13px;color:#1f2329;font-weight:normal;">Java</div>
<div class="t" style="left:908px;top:888px;font-size:13px;color:#1f2329;font-weight:normal;">9.6.0-test2</div>
<div class="t" style="left:1015px;top:888px;font-size:13px;color:#1f2329;font-weight:normal;">5</div>
<div class="t" style="left:1107px;top:888px;font-size:13px;color:#1f2329;font-weight:normal;"><span class="c">北京数据中心</span>666</div>
<div class="t" style="left:1237px;top:888px;font-size:13px;color:#1f2329;font-weight:normal;">(b) thrift-server*-SNAPSHOT.jar</div>
<div class="t" style="left:1517px;top:888px;font-size:13px;color:#1f2329;font-weight:normal;">{PATH=/root/.cargo/bin:/opt/rh/devtoolset</div>
<div class="abs" style="left:1708px;top:865px;width:174px;height:61px;background:#fff"></div>
<div class="t n" style="left:1725px;top:888px;font-size:12px;color:#0f66ff;font-weight:normal;"><span class="c">性能观测</span></div>
<div class="t n" style="left:1783px;top:888px;font-size:12px;color:#0f66ff;font-weight:normal;"><span class="c">属性管理</span></div>
<div class="t n" style="left:1841px;top:888px;font-size:12px;color:#0f66ff;font-weight:normal;"><span class="c">删除</span></div>
<div class="abs" style="left:1694px;top:266px;width:14px;height:660px;background:linear-gradient(90deg,rgba(0,0,0,0),rgba(0,0,0,.035) 60%,rgba(0,0,0,.11))"></div>
<div class="abs" style="left:1708px;top:266px;width:174px;height:41px;background:#f5f7fa;border-bottom:1px solid #dadee6"></div>
<div class="t m" style="left:1724px;top:279px;font-size:13px;color:#1f2329;font-weight:normal;-webkit-text-stroke:.25px #1f2329"><span class="c">操作</span></div>
<div class="abs" style="left:464px;top:926px;width:404px;height:2px;background:#ced3dc"></div>
<div class="abs" style="left:1898px;top:109px;width:6px;height:766px;border-radius:3px;background:#d2d7df"></div>
<div class="abs" style="left:520px;top:298px;width:315px;height:33px;border-radius:4px;background:#1a2332"></div>
<div class="abs" style="left:533px;top:331px;width:0;height:0;border-left:6px solid transparent;border-right:6px solid transparent;border-top:6px solid #1a2332"></div>
<div class="abs" style="left:525px;top:297px;width:309px;height:32px;border:3px solid #e8403a;border-radius:2px"></div>
<div class="t" style="left:528px;top:307px;font-size:13px;color:#fff;font-weight:normal;letter-spacing:.1px;-webkit-text-stroke:.25px #fff">(c) thrift-server*-SNAPSHOT.jar@xm-206@739544</div>
<svg class="abs" style="left:1848px;top:870px" width="60" height="58" viewBox="0 0 60 58">
<defs><radialGradient id="rh" cx=".42" cy=".3" r=".75"><stop offset="0" stop-color="#f4f8ff"/><stop offset=".55" stop-color="#cfdcf8"/><stop offset="1" stop-color="#8c9de0"/></radialGradient>
<linearGradient id="rf" x1="0" y1="0" x2="0" y2="1"><stop offset="0" stop-color="#3b5590"/><stop offset=".45" stop-color="#15203f"/><stop offset="1" stop-color="#080c1e"/></linearGradient>
<linearGradient id="re" x1="0" y1="0" x2="0" y2="1"><stop offset="0" stop-color="#43c6f5"/><stop offset="1" stop-color="#4d55d6"/></linearGradient>
<radialGradient id="rs" cx=".5" cy=".5" r=".5"><stop offset="0" stop-color="#9aa6c2" stop-opacity=".55"/><stop offset="1" stop-color="#9aa6c2" stop-opacity="0"/></radialGradient>
<filter id="gl" x="-1" y="-1" width="3" height="3"><feGaussianBlur stdDeviation=".8"/></filter></defs>
<ellipse cx="30" cy="53.5" rx="15" ry="3.2" fill="url(#rs)"/>
<path d="M28.5 9c.8-3 2.6-5.2 4.3-6 .4 2 .3 4.6-.9 6.3z" fill="#3d8cf5"/>
<rect x="3.5" y="20" width="7" height="15" rx="3.5" fill="url(#re)"/>
<rect x="49.5" y="20" width="7" height="15" rx="3.5" fill="url(#re)"/>
<ellipse cx="30" cy="29" rx="23.2" ry="21" fill="url(#rh)"/>
<ellipse cx="30.1" cy="27.3" rx="19.4" ry="13.5" fill="#b13d8a" opacity=".6"/>
<ellipse cx="30.1" cy="27" rx="19.3" ry="13.2" fill="url(#rf)"/>
<rect x="17.5" y="25" width="7.5" height="10.5" rx="3.7" fill="#5fe3ff" filter="url(#gl)"/>
<rect x="35.5" y="25" width="7.5" height="10.5" rx="3.7" fill="#5fe3ff" filter="url(#gl)"/>
<rect x="18.2" y="25.6" width="6" height="9.4" rx="3" fill="#fff"/>
<rect x="36.2" y="25.6" width="6" height="9.4" rx="3" fill="#fff"/>
</svg>
</body></html>
